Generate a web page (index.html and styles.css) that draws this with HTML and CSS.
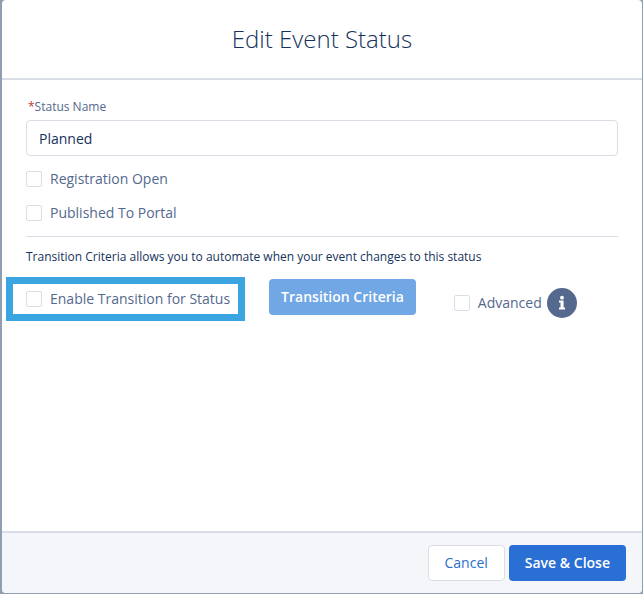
FILE: index.html
```html
<!DOCTYPE html>
<html lang="en">
<head>
    <meta charset="UTF-8">
    <meta name="viewport" content="width=device-width, initial-scale=1">
    <title>Edit Event Status</title>
    <link rel="stylesheet" href="styles.css">
</head>
<body>
    <form class="modal">
        <header class="modal-header">
            <h2>Edit Event Status</h2>
        </header>

        <div class="modal-body">
            <label class="field-label" for="status-name"><span class="required">*</span>Status Name</label>
            <input class="text-input" type="text" id="status-name" value="Planned" required>

            <div class="options">
                <label class="checkbox"><input type="checkbox">Registration Open</label>
                <label class="checkbox"><input type="checkbox">Published To Portal</label>
            </div>

            <p class="hint">Transition Criteria allows you to automate when your event changes to this status</p>

            <div class="transition-row">
                <div class="highlight">
                    <label class="checkbox"><input type="checkbox">Enable Transition for Status</label>
                </div>
                <button type="button" class="btn btn-brand" disabled>Transition Criteria</button>
                <div class="advanced">
                    <label class="checkbox"><input type="checkbox">Advanced</label>
                    <button type="button" class="info" aria-label="Info">
                        <svg viewBox="0 0 30 30" width="30" height="30" aria-hidden="true">
                            <circle cx="15" cy="9.7" r="1.9"/>
                            <path d="M12 12.6h4.6v6.9H18v2h-6v-2h1.5v-4.9H12z"/>
                        </svg>
                    </button>
                </div>
            </div>
        </div>

        <footer class="modal-footer">
            <button type="button" class="btn btn-neutral">Cancel</button>
            <button type="submit" class="btn btn-brand">Save &amp; Close</button>
        </footer>
    </form>
</body>
</html>
```

FILE: styles.css
```css
* {
    box-sizing: border-box;
}

body {
    margin: 0;
    min-height: 100vh;
    padding: 0 1px 1px 2px;
    display: flex;
    background-color: #919db0;
    color: #16325c;
    font-family: "Open Sans", "Noto Sans", sans-serif;
    font-size: 14px;
    line-height: 20px;
}

.modal {
    flex: 1;
    display: flex;
    flex-direction: column;
    background-color: #fff;
    border-radius: 4px;
    overflow: hidden;
}

.modal-header {
    padding: 24px;
    border-bottom: 2px solid #d8dde6;
    text-align: center;
}

h2 {
    margin: 0;
    font-size: 24px;
    line-height: 30px;
    font-weight: 300;
}

.modal-body {
    flex: 1;
    padding: 17px 24px;
}

.field-label {
    display: block;
    padding-left: 2px;
    margin-bottom: 3px;
    color: #54698d;
    font-size: 12px;
}

.required {
    color: #c23934;
}

.text-input {
    display: block;
    width: 100%;
    height: 36px;
    padding: 0 12px;
    border: 1px solid #d8dde6;
    border-radius: 4px;
    color: #16325c;
    font: inherit;
}

.options {
    display: flex;
    flex-direction: column;
    align-items: flex-start;
    gap: 14px;
    padding: 13px 0;
    border-bottom: 1px solid #d8dde6;
}

.checkbox {
    display: flex;
    align-items: center;
    gap: 8px;
    color: #54698d;
    white-space: nowrap;
}

.checkbox input {
    appearance: none;
    width: 16px;
    height: 16px;
    margin: 0;
    border: 1px solid #d8dde6;
    border-radius: 2px;
    background-color: #fff;
}

.checkbox input:checked {
    background-color: #2a6fd3;
}

.hint {
    margin: 10px 0;
    font-size: 12px;
}

.transition-row {
    display: flex;
    align-items: flex-start;
}

/* the frame hangs into the body padding so its checkbox stays in line */
.highlight {
    margin: 0 24px 0 -20px;
    padding: 5px 8px 5px 13px;
    border: 7px solid #3ba5e1;
}

.advanced {
    display: flex;
    align-items: center;
    gap: 5px;
    margin: 11px 0 0 38px;
}

.info {
    width: 30px;
    height: 30px;
    padding: 0;
    border: none;
    border-radius: 50%;
    background-color: #54698d;
    cursor: pointer;
}

.info svg {
    display: block;
    fill: #fff;
}

.btn {
    height: 36px;
    padding: 0 16px;
    border: 1px solid transparent;
    border-radius: 4px;
    font: inherit;
    white-space: nowrap;
    cursor: pointer;
}

.btn-brand {
    padding: 0 15px;
    background-color: #2a6fd3;
    color: #fff;
    font-weight: 600;
}

.btn-brand:disabled {
    margin-top: 2px;
    padding: 0 11px;
    background-color: #71a7e4;
    cursor: default;
}

.btn-neutral {
    border-color: #d8dde6;
    background-color: #fff;
    color: #2a6fc9;
}

.modal-footer {
    display: flex;
    justify-content: flex-end;
    gap: 4px;
    padding: 12px 16px;
    border-top: 2px solid #d8dde6;
    background-color: #f4f6f9;
}
```
